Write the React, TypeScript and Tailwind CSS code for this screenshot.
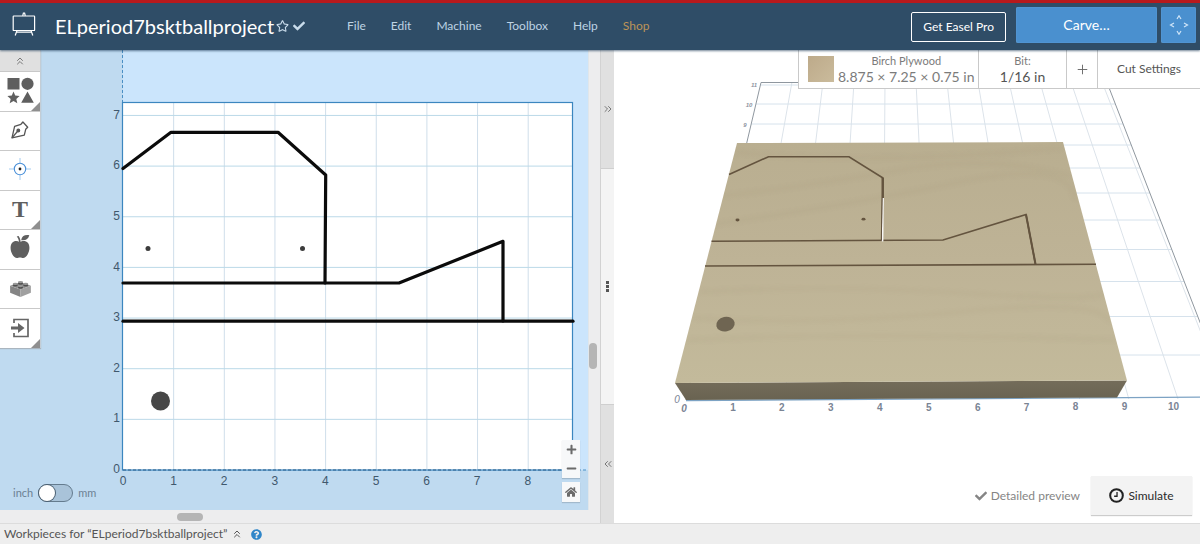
import React from "react";
import { ChevronsLeft, ChevronsRight, ChevronsUp, Plus } from "lucide-react";
import { FaCheck, FaHome, FaMinus, FaPlus, FaQuestionCircle, FaRegStar } from "react-icons/fa";

const menu = ["File", "Edit", "Machine", "Toolbox", "Help"];

function EaselLogo() {
  return (
    <svg viewBox="0 0 24 24" className="h-6 w-6" fill="none" stroke="#fff" strokeWidth="1.2">
      <rect x="1.2" y="4" width="21.4" height="14.500" rx="0.6" />
      <path d="M10.700 3.800l.7-2.800h1.200l.7 2.800M4 20.200h16M5 18.500L3.200 23.500M19 18.500l1.800 5" />
    </svg>
  );
}

function ShapesIcon() {
  return (
    <svg viewBox="0 0 27 27" className="h-[27px] w-[27px]" fill="#5f5f5f">
      <rect x="0.5" y="1" width="12" height="11.5" />
      <circle cx="20.5" cy="6.8" r="6.1" />
      <path d="M6.5 14.5l1.7 4.1 4.4.4-3.3 2.9 1 4.3-3.8-2.3-3.8 2.3 1-4.3L.4 19l4.4-.4zM20.5 14.6l6.3 11.2H14.2z" />
    </svg>
  );
}

function PenIcon() {
  return (
    <svg viewBox="0 0 18 18" className="h-[18px] w-[18px]" fill="none" stroke="#555" strokeWidth="1.300" strokeLinejoin="round">
      <path d="M1 16.800L3.600 5.400L9.900 3.300L11.900 1L16.700 6.200L14.700 8.300L13.300 14.200z" />
      <path d="M1 16.800l5.800-6.800" />
      <circle cx="7.300" cy="9.500" r="1.300" fill="#555" stroke="#555" />
    </svg>
  );
}

function TargetIcon() {
  return (
    <svg viewBox="0 0 22 22" className="h-[22px] w-[22px]" fill="none">
      <path d="M11 0v5M11 17v5M0 11h5M17 11h5" stroke="#a3cbf0" strokeWidth="1" />
      <circle cx="11" cy="11" r="5.7" stroke="#4a90d9" strokeWidth="1.1" />
      <circle cx="11" cy="11" r="1.4" fill="#222" />
    </svg>
  );
}

function AppleIcon() {
  return (
    <svg viewBox="0 0 20 25" className="mb-1 h-[25px] w-5" fill="#5f5f5f">
      <path d="M9.800 8.300C7.500 6.600 4.200 6.500 2.200 8.700C-.2 11.500.2 16.600 2.400 20.400C4 23.200 6 24.600 8.300 23.700C9.400 23.300 10.600 23.300 11.700 23.700C14 24.600 16 23.200 17.600 20.400C19.800 16.600 20.200 11.500 17.800 8.700C15.800 6.500 12.100 6.600 9.800 8.300z" />
      <path d="M11.200 6.200C11.600 2.300 14.500.5 19.300 1.200C18.300 4.900 15.700 6.900 11.200 6.200z" />
      <path d="M6.700 2.500L8.600 1.900C9.900 3.700 10.600 5.700 10.700 8.800H9.100C9 6.200 8.200 4.200 6.700 2.500z" />
    </svg>
  );
}

function BrickIcon() {
  return (
    <svg viewBox="0 0 24 18" className="h-[17px] w-[23px]">
      <path d="M1 6l11 4v8L1 13.500z" fill="#858585" />
      <path d="M12 10l11-4v7.500L12 18z" fill="#a0a0a0" />
      <path d="M1 6l11-4 11 4-11 4z" fill="#929292" />
      {[[12, 2.6], [6.500, 4.600], [17.500, 4.600], [12, 6.800]].map(([x, y]) => (
        <g key={`${x}-${y}`}>
          <ellipse cx={x} cy={y + 0.8} rx="2.700" ry="1.600" fill="#4f4f4f" />
          <ellipse cx={x} cy={y - 0.4} rx="2.700" ry="1.200" fill="#9a9a9a" />
        </g>
      ))}
    </svg>
  );
}

function ImportIcon() {
  return (
    <svg viewBox="0 0 20 20" className="h-5 w-5">
      <path d="M4 5V1.500h14v17H4V15" fill="none" stroke="#666" strokeWidth="1.7" />
      <path d="M1 8.500h7V5l6.500 5L8 15v-3.500H1z" fill="#666" />
    </svg>
  );
}

function TextIcon() {
  return <span className="font-['Liberation_Serif',serif] text-2xl leading-none font-bold text-[#5f5f5f]">T</span>;
}

const tools = [
  { name: "Shapes", icon: <ShapesIcon />, more: true },
  { name: "Pen", icon: <PenIcon />, more: false },
  { name: "Drill", icon: <TargetIcon />, more: false },
  { name: "Text", icon: <TextIcon />, more: true },
  { name: "Icons", icon: <AppleIcon />, more: false },
  { name: "Apps", icon: <BrickIcon />, more: false },
  { name: "Import", icon: <ImportIcon />, more: true },
];

function Header() {
  return (
    <header className="relative z-10 flex h-[50px] shrink-0 items-center border-t-[3px] border-[#b8191c] bg-[#2f4d67] pr-1 pl-3 shadow-[0_1px_2px_rgba(20,50,80,0.6)]">
      <div className="flex w-[335px] items-center pb-0.5">
        <a href="#home" aria-label="Easel home" className="mr-[19px] pb-1">
          <EaselLogo />
        </a>
        <h1 className="text-xl text-white">ELperiod7bsktballproject</h1>
        <button aria-label="Favorite" className="ml-0.5 text-[#c9dceb]">
          <FaRegStar className="h-3 w-[13px]" />
        </button>
        <FaCheck className="ml-1 h-3 w-3 text-[#c9dceb]" />
      </div>
      <nav className="flex flex-1 items-center gap-[25px] pb-px text-xs text-[#bed3e4]">
        {menu.map((m) => (
          <button key={m}>{m}</button>
        ))}
        <a href="#shop" className="text-[#bd9458]">Shop</a>
      </nav>
      <button className="h-[30px] rounded-xs border border-white px-[11px] text-xs text-white">Get Easel Pro</button>
      <div className="ml-[10px] flex gap-1 pb-[3px]">
        <button className="h-9 w-[141px] rounded-xs bg-[#4a90cf] text-sm text-white shadow-[inset_0_0_1px_#8cc2f2]">Carve…</button>
        <button aria-label="Jog machine" className="flex h-9 w-[35px] items-center justify-center rounded-xs bg-[#4a90cf] shadow-[inset_0_0_1px_#8cc2f2]">
          <svg viewBox="0 0 20 20" className="h-5 w-5" fill="none" stroke="#cfe5f8" strokeWidth="1.2">
            <path d="M8 4l2-3.200L12 4M8 16l2 3.200L12 16M5 8l-3.500 2L5 12M15 8l3.500 2L15 12" />
          </svg>
        </button>
      </div>
    </header>
  );
}

const X0 = 123;
const Y0 = 470;
const UNIT = 50.65;

function DesignDrawing() {
  const xs = [0, 1, 2, 3, 4, 5, 6, 7, 8];
  const ys = [0, 1, 2, 3, 4, 5, 6, 7];
  return (
    <svg viewBox="0 50 588 460" className="block h-full w-full" role="img" aria-label="Design canvas">
      <rect x="123" y="50" width="465" height="420" fill="#cbe5fc" />
      <rect x="123" y="103" width="450" height="367" fill="#fff" />
      <path d={xs.slice(1).map((k) => `M${X0 + k * UNIT} 103V470`).join("")} stroke="#cfdeea" />
      <path d={ys.slice(1).map((k) => `M123 ${Y0 - k * UNIT}H573`).join("")} stroke="#bbd9e8" />
      <path d="M122.500 50V103M573 470H588" stroke="#4a8fc4" strokeDasharray="3 2" />
      <rect x="122.500" y="102.500" width="450" height="367.500" fill="none" stroke="#3b86bf" strokeWidth="1.2" />
      <path d="M123 470H573" stroke="#2c5f8a" strokeDasharray="3 2" />
      <g fill="none" stroke="#0b0b0b" strokeWidth="3.200" strokeLinecap="round" strokeLinejoin="round">
        <path d="M123 168.500L171 132.300H278L325.700 175L325 283" />
        <path d="M123 283H399L503 241.300V321" />
        <path d="M123 321.200H573" />
      </g>
      <circle cx="148" cy="248.500" r="2.500" fill="#3c3c3c" />
      <circle cx="302.500" cy="248.500" r="2.500" fill="#3c3c3c" />
      <circle cx="160.500" cy="401" r="9.500" fill="#474747" />
      <g fill="#3f586d" fontSize="12" fontFamily="Liberation Sans, sans-serif">
        {xs.map((k) => (
          <text key={k} x={X0 + k * 50.6} y="485" textAnchor="middle">{k}</text>
        ))}
        {ys.map((k) => (
          <text key={k} x="120" y={473 - k * 50.6} textAnchor="end">{k}</text>
        ))}
      </g>
    </svg>
  );
}

function Toolbar() {
  return (
    <div className="absolute top-0 left-0 flex h-[298px] w-[41px] flex-col border-r border-[#c4cdd5] bg-white shadow-[0_1px_1px_#aab5bf]">
      <button aria-label="Collapse toolbar" className="flex h-[22px] shrink-0 items-center justify-center border-b border-[#c8c8c8] bg-[#e0e0e0] text-[#777]">
        <ChevronsUp size={12} strokeWidth={2} />
      </button>
      {tools.map((t) => (
        <button key={t.name} aria-label={t.name} className="relative flex min-h-0 flex-1 items-center justify-center border-b border-[#c9c9c9] pb-0.5 last:border-b-0">
          {t.icon}
          {t.more && (
            <svg viewBox="0 0 9 9" className="absolute right-0 bottom-0 h-[9px] w-[9px]">
              <path d="M9 0v9H0z" fill="#8f8f8f" />
            </svg>
          )}
        </button>
      ))}
    </div>
  );
}

function DesignPane() {
  return (
    <section className="flex w-1/2 flex-col bg-[#ededee]">
      <div className="flex min-h-0 flex-1">
        <div className="relative min-w-0 flex-1 bg-[#bfdaf0]">
          <DesignDrawing />
          <Toolbar />
          <label className="absolute bottom-2 left-[13px] flex items-center gap-[5px] text-[11px] text-[#6c8193]">
            inch
            <input type="checkbox" role="switch" className="peer sr-only" />
            <span className="flex h-[18px] w-[35px] rounded-full border border-[#647b8e] bg-[#a9c3d9]">
              <span className="h-4 w-4 rounded-full bg-white shadow-[0_0_0_1px_#4b6072]" />
            </span>
            mm
          </label>
          <div className="absolute right-2 bottom-2 flex w-[18px] flex-col gap-1 text-[#6b6b6b]">
            <div className="flex flex-col bg-[#f7f8f9] shadow-[0_1px_1px_rgba(0,0,0,0.15)]">
              <button aria-label="Zoom in" className="flex h-[19px] items-center justify-center"><FaPlus size={11} /></button>
              <button aria-label="Zoom out" className="flex h-[19px] items-center justify-center"><FaMinus size={11} /></button>
            </div>
            <button aria-label="Reset view" className="flex h-5 items-center justify-center bg-[#f7f8f9] shadow-[0_1px_1px_rgba(0,0,0,0.15)]">
              <FaHome size={12} />
            </button>
          </div>
        </div>
        <div className="flex w-3 flex-col items-center border-l border-[#e0e6ea] pr-[3px]">
          <div className="flex-[293]" />
          <div className="h-[26px] w-2 rounded-full bg-[#b5b5b5]" />
          <div className="flex-[141]" />
        </div>
      </div>
      <div className="flex h-[13px] items-center pr-3">
        <div className="flex-[177]" />
        <div className="h-2 w-[26px] rounded-full bg-[#b5b5b5]" />
        <div className="flex-[385]" />
      </div>
    </section>
  );
}

function Splitter() {
  return (
    <div className="flex w-[14px] shrink-0 flex-col border-l border-[#d2d2d2] text-[#777]">
      <button aria-label="Expand design" className="flex flex-1 items-center justify-center border-b border-[#cfcfcf] bg-[#e0e0e0]">
        <ChevronsRight size={12} />
      </button>
      <div className="flex flex-[2] flex-col items-center justify-center gap-px bg-[#f4f4f4]">
        <span className="h-[3px] w-[3px] bg-[#555]" />
        <span className="h-[3px] w-[3px] bg-[#555]" />
        <span className="h-[3px] w-[3px] bg-[#555]" />
      </div>
      <button aria-label="Expand preview" className="flex flex-1 items-center justify-center border-t border-[#cfcfcf] bg-[#e0e0e0]">
        <ChevronsLeft size={12} />
      </button>
    </div>
  );
}

const rows = [355, 316.5, 281.5, 249.5, 220, 193, 168, 145, 124, 104, 85];
const leftEdge = (y: number) => 686 + ((400 - y) * 75) / 318;
const rightEdge = (y: number) => 1229 - ((397 - y) * 122) / 315;
const cols = [1, 2, 3, 4, 5, 6, 7, 8, 9, 10, 11];
const grain = [
  "M735 152Q860 166 1062 148",
  "M722 196Q810 186 900 170T1070 176",
  "M716 224Q850 205 960 182T1075 200",
  "M700 292Q830 284 980 294T1104 286",
  "M694 318Q820 326 960 312T1110 322",
  "M688 340Q860 332 1115 340",
];

function PreviewDrawing() {
  return (
    <svg viewBox="614 50 586 473" className="block h-full w-full" role="img" aria-label="3D preview">
      <defs>
        <linearGradient id="top" x1="0" y1="0" x2="0" y2="1">
          <stop offset="0" stopColor="#b9ae90" />
          <stop offset="0.5" stopColor="#beb396" />
          <stop offset="1" stopColor="#c3ba9b" />
        </linearGradient>
        <linearGradient id="front" x1="0" y1="0" x2="0" y2="1">
          <stop offset="0" stopColor="#746c5a" />
          <stop offset="1" stopColor="#696351" />
        </linearGradient>
        <filter id="soft" x="-10%" y="-200%" width="120%" height="500%">
          <feGaussianBlur stdDeviation="2" />
        </filter>
        <clipPath id="board">
          <path d="M737 143L1063 142L1127 380.500L675 383z" />
        </clipPath>
      </defs>
      <path d={cols.map((k) => `M${686 + k * 49.2} 399L${761 + k * 31} 82`).join("")} stroke="#dce3ea" />
      <path d={rows.map((y) => `M${leftEdge(y)} ${y}H${rightEdge(y)}`).join("")} stroke="#d6e2ec" />
      <path d="M686 400L761 82.500H1107L1229 397" fill="none" stroke="#8f979f" />
      <path d="M686 400.500L1229 397" stroke="#7da3c4" strokeWidth="1.3" />
      <path d="M675 383L1127 380.500L1117 397.500L686 400z" fill="url(#front)" />
      <path d="M737 143L1063 142L1127 380.500L675 383z" fill="url(#top)" />
      <g clipPath="url(#board)" fill="none" stroke="#9d8d70" strokeWidth="3" opacity="0.12" filter="url(#soft)">
        {grain.map((d) => (
          <path key={d} d={d} />
        ))}
      </g>
      <g fill="none" stroke="#64543f" strokeWidth="1.600">
        <path d="M729 174.500L768.500 156.700H849L883 178L882 241" />
        <path d="M711.500 241.300L943 240L1026 214.500L1035.500 264.500" />
        <path d="M705 266L1096 264.300" />
        <path d="M882.700 178V198" strokeWidth="2.400" />
        <path d="M1026 214.500L1035.500 264" strokeWidth="2" />
      </g>
      <path d="M883.200 198L882.600 241.500" stroke="#f7f6f4" strokeWidth="1.500" />
      <path d="M882 198L881.300 240" stroke="#64543f" strokeWidth="1" />
      <ellipse cx="737.500" cy="220" rx="2" ry="1.400" fill="#64543f" />
      <ellipse cx="863.500" cy="219.200" rx="2" ry="1.400" fill="#64543f" />
      <ellipse cx="725.500" cy="324.200" rx="9.300" ry="7.300" fill="#6f6552" transform="rotate(-12 725.500 324.200)" />
      <g fill="#7a8494" fontSize="10" fontWeight="bold" fontFamily="Liberation Sans, sans-serif" textAnchor="middle">
        <text x="677" y="403" fontStyle="italic" fontWeight="normal">0</text>
        <text x="684" y="412" fontStyle="italic">0</text>
        {[1, 2, 3, 4, 5, 6, 7, 8, 9, 10].map((k) => (
          <text key={k} x={684 + k * 48.95} y={k > 7 ? 410 : 411}>{k}</text>
        ))}
      </g>
      <g fill="#8d93a0" fontSize="6" fontWeight="bold" fontStyle="italic" fontFamily="Liberation Sans, sans-serif" textAnchor="middle">
        <text x="754" y="87">11</text>
        <text x="749" y="107">10</text>
        <text x="745" y="127">9</text>
      </g>
    </svg>
  );
}

function PreviewPane() {
  return (
    <section className="relative min-w-0 flex-1 bg-white">
      <PreviewDrawing />
      <div className="absolute top-0 right-0 flex h-[39px] w-[402px] divide-x divide-[#c9c9c9] border-b border-l border-[#c9c9c9] bg-white text-[#666]">
        <button className="flex flex-1 items-center gap-1 pl-[9px]">
          <span className="h-[26px] w-[26px] bg-linear-to-br from-[#bdaa8a] to-[#cabb9c]" />
          <span className="flex flex-col text-center text-[#7b7b7b]">
            <span className="text-[11px] leading-4">Birch Plywood</span>
            <span className="text-sm leading-4">8.875 × 7.25 × 0.75 in</span>
          </span>
        </button>
        <button className="flex w-[88px] flex-col items-center justify-center">
          <span className="text-[11px] leading-4 text-[#7b7b7b]">Bit:</span>
          <span className="text-sm leading-4 text-[#555]">1/16 in</span>
        </button>
        <button aria-label="Add bit" className="flex w-[31px] items-center justify-center"><Plus size={15} strokeWidth={1.5} /></button>
        <button className="w-[102px] text-xs text-[#555]">Cut Settings</button>
      </div>
      <div className="absolute right-2 bottom-2 flex h-[39px] items-center gap-[11px] text-xs">
        <label className="flex items-center gap-1 text-[#858585]">
          <input type="checkbox" defaultChecked className="sr-only" />
          <FaCheck size={12} />
          Detailed preview
        </label>
        <button className="flex h-full w-[101px] items-center justify-center gap-1 bg-[#f3f3f3] text-[#2a2a2a] shadow-[0_1px_1px_rgba(0,0,0,0.2)]">
          <svg viewBox="0 0 14 14" className="h-[15px] w-[15px]" fill="none" stroke="#222">
            <circle cx="7" cy="7" r="5.900" strokeWidth="1.900" />
            <path d="M7.500 3.800V7.700H4.800" strokeWidth="1.200" />
          </svg>
          Simulate
        </button>
      </div>
    </section>
  );
}

export default function App() {
  return (
    <div className="flex h-screen flex-col bg-white font-['Lato',sans-serif]">
      <Header />
      <main className="flex min-h-0 flex-1">
        <DesignPane />
        <Splitter />
        <PreviewPane />
      </main>
      <footer className="flex h-[21px] shrink-0 items-center border-t border-[#dcdcdc] bg-[#eeeeee] pl-1 text-xs text-[#555]">
        Workpieces for “ELperiod7bsktballproject”
        <button aria-label="Show workpieces" className="ml-1"><ChevronsUp size={12} /></button>
        <button aria-label="Help" className="ml-2 text-[#2f86c9]"><FaQuestionCircle size={11} /></button>
      </footer>
    </div>
  );
}
